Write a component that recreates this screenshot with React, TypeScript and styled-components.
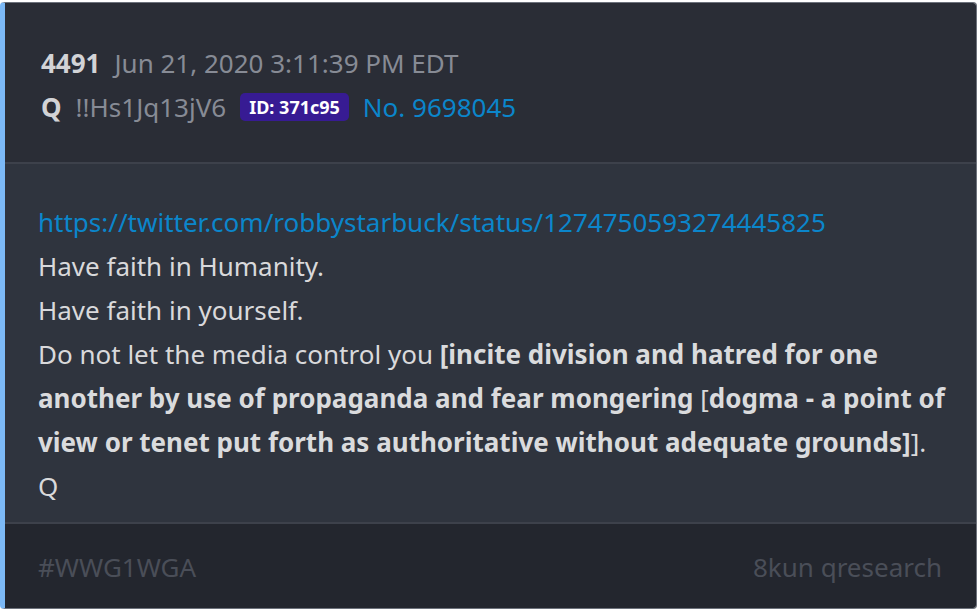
import React from 'react'
import styled, { createGlobalStyle } from 'styled-components'

const GlobalStyle = createGlobalStyle`
  html, body {
    margin: 0;
    padding: 0;
    background: #ffffff;
  }
  body {
    font-family: 'Noto Sans', 'Open Sans', sans-serif;
  }
`

const Page = styled.div`
  width: 978px;
  height: 610px;
  padding: 2px 1px 1px 0;
  box-sizing: border-box;
`

const Card = styled.article`
  height: 100%;
  display: flex;
  flex-direction: column;
  border: 1px solid #6d727c;
  border-left: 5px solid #7cb9f6;
  border-radius: 4px;
  overflow: hidden;
  box-sizing: border-box;
  font-size: 26px;
  line-height: 44px;
`

const Header = styled.header`
  background: #2a2d36;
  padding: 38px 36px 33px 36px;
  border-bottom: 2px solid #3d414b;
`

const Row = styled.div`
  display: flex;
  align-items: center;
  gap: 14px;
  white-space: nowrap;
`

const Strong = styled.span`
  font-weight: 700;
  color: #d2d3d6;
`

const Muted = styled.span`
  color: #878b95;
`

const Badge = styled.span`
  background: #371b93;
  color: #ffffff;
  font-weight: 700;
  font-size: 18px;
  line-height: 28px;
  padding: 0 9px;
  border-radius: 5px;
`

const Link = styled.a`
  color: #0b86cb;
  text-decoration: none;
`

const Body = styled.section`
  flex: 1;
  background: #2f343e;
  padding: 36px 30px 12px 33px;
  border-bottom: 2px solid #3d414b;
  color: #d9d9db;
`

const Line = styled.div``

const Em = styled.strong`
  font-weight: 700;
  color: #dadbdd;
`

const Footer = styled.footer`
  background: #23262e;
  padding: 21px 34px 19px 33px;
  display: flex;
  justify-content: space-between;
  color: #4a4e58;
`

export default function App() {
  return (
    <Page>
      <GlobalStyle />
      <Card>
        <Header>
          <Row>
            <Strong>4491</Strong>
            <Muted>Jun 21, 2020 3:11:39 PM EDT</Muted>
          </Row>
          <Row>
            <Strong>Q</Strong>
            <Muted>!!Hs1Jq13jV6</Muted>
            <Badge>ID: 371c95</Badge>
            <Link href="#">No. 9698045</Link>
          </Row>
        </Header>
        <Body>
          <Line>
            <Link href="#">https://twitter.com/robbystarbuck/status/1274750593274445825</Link>
          </Line>
          <Line>Have faith in Humanity.</Line>
          <Line>Have faith in yourself.</Line>
          <Line>
            Do not let the media control you{' '}
            <Em>[incite division and hatred for one another by use of propaganda and fear mongering</Em>{' '}
            [<Em>dogma - a point of view or tenet put forth as authoritative without adequate grounds]</Em>].
          </Line>
          <Line>Q</Line>
        </Body>
        <Footer>
          <span>#WWG1WGA</span>
          <span>8kun qresearch</span>
        </Footer>
      </Card>
    </Page>
  )
}
